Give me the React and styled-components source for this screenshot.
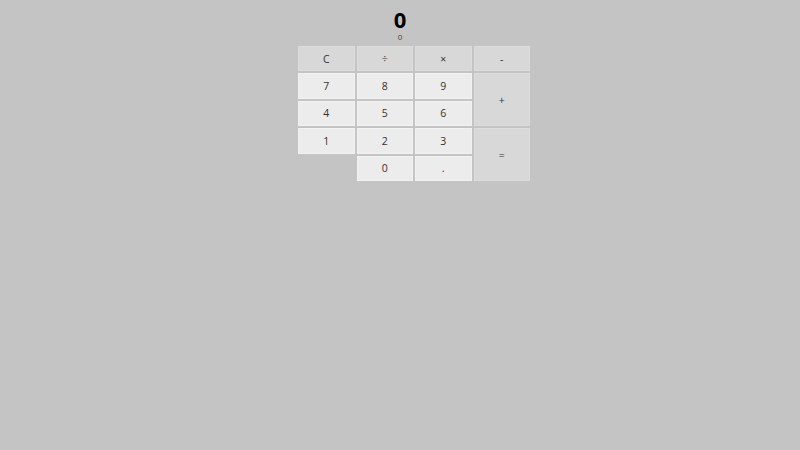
import React from "react";
import styled, { createGlobalStyle } from "styled-components";

const Global = createGlobalStyle`
  html, body { margin: 0; padding: 0; background: #c4c4c4; }
  body { font-family: "Open Sans", "Noto Sans", sans-serif; }
`;

const Page = styled.div`
  width: 800px;
  height: 450px;
  display: flex;
  flex-direction: column;
  align-items: center;
`;

const Display = styled.div`
  display: flex;
  flex-direction: column;
  align-items: center;
  gap: 2px;
  padding-top: 8px;
  height: 46px;
  box-sizing: border-box;
`;

const Result = styled.div`
  font-size: 22px;
  font-weight: 700;
  line-height: 22px;
  color: #000;
`;

const Expr = styled.div`
  font-size: 8px;
  line-height: 9px;
  color: #444;
`;

const Pad = styled.div`
  display: grid;
  grid-template-columns: repeat(4, 56.5px);
  grid-template-rows: repeat(5, 25.4px);
  gap: 2px;
  margin-left: 28px;
`;

const Key = styled.button`
  box-sizing: border-box;
  margin: 0;
  padding: 0;
  border: 1px solid ${(p) => (p.$op ? "#dcdcdc" : "#f2f2f2")};
  background: ${(p) => (p.$op ? "#d8d8d8" : "#ececec")};
  color: #333;
  font-family: "Open Sans", "Noto Sans", sans-serif;
  font-size: 10.5px;
  grid-column: ${(p) => p.$col};
  grid-row: ${(p) => p.$row};
`;

const keys = [
  { l: "C", c: 1, r: 1, op: true },
  { l: "÷", c: 2, r: 1, op: true },
  { l: "×", c: 3, r: 1, op: true },
  { l: "-", c: 4, r: 1, op: true },
  { l: "7", c: 1, r: 2 },
  { l: "8", c: 2, r: 2 },
  { l: "9", c: 3, r: 2 },
  { l: "+", c: 4, r: "2 / span 2", op: true },
  { l: "4", c: 1, r: 3 },
  { l: "5", c: 2, r: 3 },
  { l: "6", c: 3, r: 3 },
  { l: "1", c: 1, r: 4 },
  { l: "2", c: 2, r: 4 },
  { l: "3", c: 3, r: 4 },
  { l: "=", c: 4, r: "4 / span 2", op: true },
  { l: "0", c: 2, r: 5 },
  { l: ".", c: 3, r: 5 },
];

export default function App() {
  return (
    <Page>
      <Global />
      <Display>
        <Result>0</Result>
        <Expr>0</Expr>
      </Display>
      <Pad>
        {keys.map((k) => (
          <Key key={k.l} $col={k.c} $row={k.r} $op={k.op}>
            {k.l}
          </Key>
        ))}
      </Pad>
    </Page>
  );
}
